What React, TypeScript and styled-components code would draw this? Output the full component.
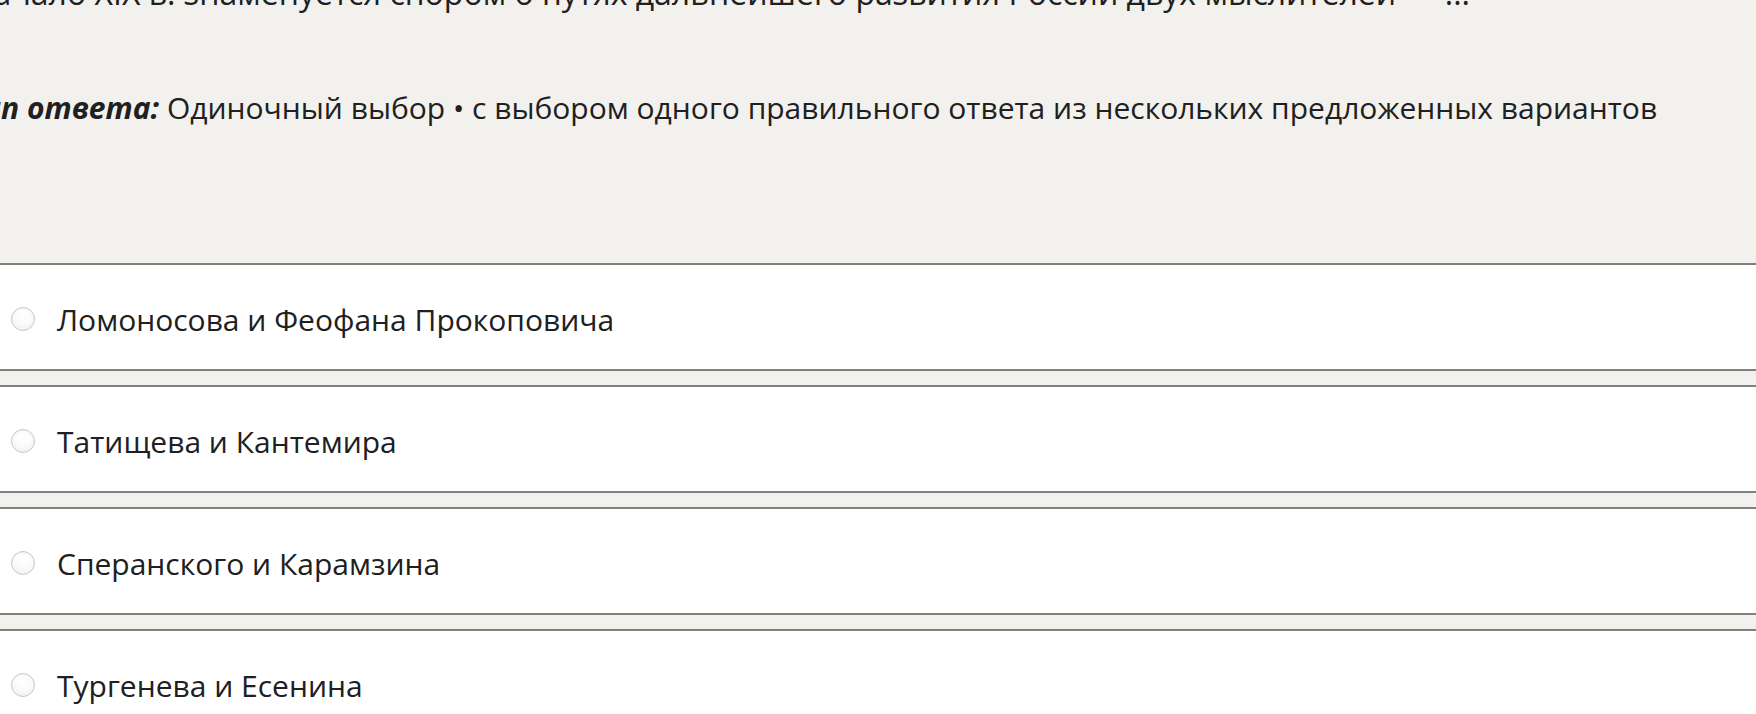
import React from "react";
import styled, { createGlobalStyle } from "styled-components";

const Global = createGlobalStyle`
  html, body { margin: 0; padding: 0; background: #f2f1ed; overflow: hidden; }
  body { font-family: "Open Sans", "Noto Sans", sans-serif; color: #202020; }
`;

const Page = styled.div`
  margin-left: -42px;
  width: calc(100% + 84px);
  font-size: 30px;
  line-height: 45px;
`;

const Question = styled.div`
  margin-top: -30px;
  padding-left: 12px;
  font-size: 32px;
  white-space: nowrap;
`;

const AnswerType = styled.div`
  margin-top: 70px;
  padding-left: 9px;
  white-space: nowrap;
`;

const TypeLabel = styled.b`
  font-weight: 700;
  font-style: italic;
`;

const Options = styled.div`
  margin-top: 133px;
  display: flex;
  flex-direction: column;
  gap: 14px;
`;

const Option = styled.label`
  display: flex;
  align-items: flex-start;
  height: 104px;
  background: #ffffff;
  border-top: 2px solid #80807c;
  border-bottom: 2px solid #80807c;
  padding-left: 53px;
  box-sizing: content-box;
`;

const Radio = styled.span`
  flex: none;
  width: 22px;
  height: 22px;
  margin-top: 42px;
  border-radius: 50%;
  border: 1px solid #c9c9c9;
  background: radial-gradient(circle at 50% 35%, #ffffff 0%, #fbfbfb 45%, #ececec 100%);
  box-shadow: inset 0 1px 1px rgba(0, 0, 0, 0.04);
`;

const OptionText = styled.span`
  margin-top: 32px;
  margin-left: 22px;
  white-space: nowrap;
`;

const options = [
  "Ломоносова и Феофана Прокоповича",
  "Татищева и Кантемира",
  "Сперанского и Карамзина",
  "Тургенева и Есенина",
];

export default function App() {
  return (
    <>
      <Global />
      <Page>
        <Question>
          Начало XIX в. знаменуется спором о путях дальнейшего развития России двух мыслителей — ...
        </Question>
        <AnswerType>
          <TypeLabel>Тип ответа:</TypeLabel> Одиночный выбор • с выбором одного правильного ответа из нескольких предложенных вариантов
        </AnswerType>
        <Options>
          {options.map((o) => (
            <Option key={o}>
              <Radio />
              <OptionText>{o}</OptionText>
            </Option>
          ))}
        </Options>
      </Page>
    </>
  );
}
